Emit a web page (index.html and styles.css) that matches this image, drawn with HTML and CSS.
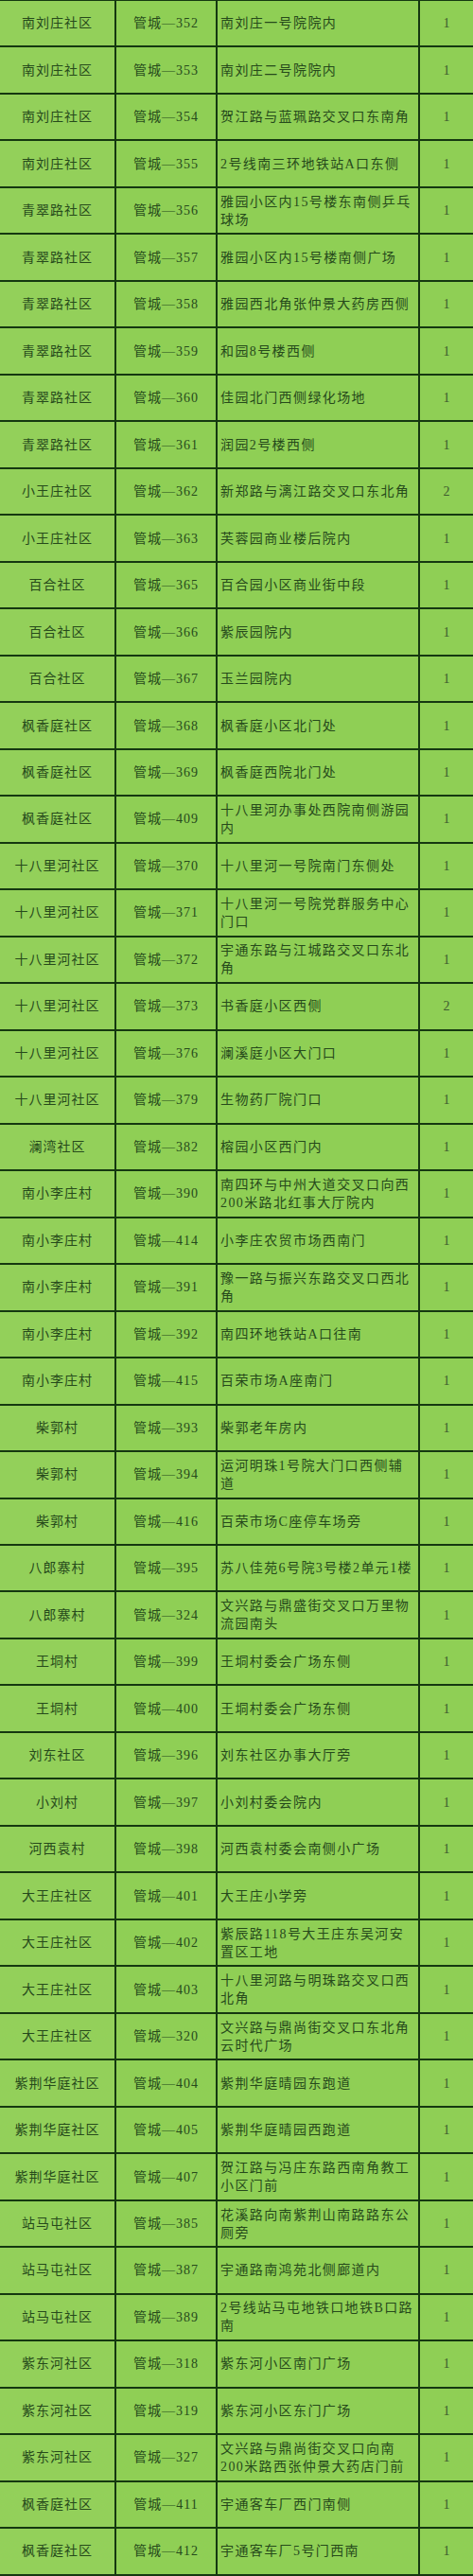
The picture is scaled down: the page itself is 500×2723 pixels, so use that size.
FILE: index.html
```html
<!DOCTYPE html>
<html lang="zh-CN">
<head>
<meta charset="utf-8">
<title>管城点位表</title>
<link rel="stylesheet" href="styles.css">
</head>
<body>
<div class="sheet">
<div class="c name">南刘庄社区</div><div class="c code">管城—352</div><div class="c loc">南刘庄一号院院内</div><div class="c num">1</div>
<div class="c name">南刘庄社区</div><div class="c code">管城—353</div><div class="c loc">南刘庄二号院院内</div><div class="c num">1</div>
<div class="c name">南刘庄社区</div><div class="c code">管城—354</div><div class="c loc">贺江路与蓝珮路交叉口东南角</div><div class="c num">1</div>
<div class="c name">南刘庄社区</div><div class="c code">管城—355</div><div class="c loc">2号线南三环地铁站A口东侧</div><div class="c num">1</div>
<div class="c name">青翠路社区</div><div class="c code">管城—356</div><div class="c loc">雅园小区内15号楼东南侧乒乓<br>球场</div><div class="c num">1</div>
<div class="c name">青翠路社区</div><div class="c code">管城—357</div><div class="c loc">雅园小区内15号楼南侧广场</div><div class="c num">1</div>
<div class="c name">青翠路社区</div><div class="c code">管城—358</div><div class="c loc">雅园西北角张仲景大药房西侧</div><div class="c num">1</div>
<div class="c name">青翠路社区</div><div class="c code">管城—359</div><div class="c loc">和园8号楼西侧</div><div class="c num">1</div>
<div class="c name">青翠路社区</div><div class="c code">管城—360</div><div class="c loc">佳园北门西侧绿化场地</div><div class="c num">1</div>
<div class="c name">青翠路社区</div><div class="c code">管城—361</div><div class="c loc">润园2号楼西侧</div><div class="c num">1</div>
<div class="c name">小王庄社区</div><div class="c code">管城—362</div><div class="c loc">新郑路与漓江路交叉口东北角</div><div class="c num">2</div>
<div class="c name">小王庄社区</div><div class="c code">管城—363</div><div class="c loc">芙蓉园商业楼后院内</div><div class="c num">1</div>
<div class="c name">百合社区</div><div class="c code">管城—365</div><div class="c loc">百合园小区商业街中段</div><div class="c num">1</div>
<div class="c name">百合社区</div><div class="c code">管城—366</div><div class="c loc">紫辰园院内</div><div class="c num">1</div>
<div class="c name">百合社区</div><div class="c code">管城—367</div><div class="c loc">玉兰园院内</div><div class="c num">1</div>
<div class="c name">枫香庭社区</div><div class="c code">管城—368</div><div class="c loc">枫香庭小区北门处</div><div class="c num">1</div>
<div class="c name">枫香庭社区</div><div class="c code">管城—369</div><div class="c loc">枫香庭西院北门处</div><div class="c num">1</div>
<div class="c name">枫香庭社区</div><div class="c code">管城—409</div><div class="c loc">十八里河办事处西院南侧游园<br>内</div><div class="c num">1</div>
<div class="c name">十八里河社区</div><div class="c code">管城—370</div><div class="c loc">十八里河一号院南门东侧处</div><div class="c num">1</div>
<div class="c name">十八里河社区</div><div class="c code">管城—371</div><div class="c loc">十八里河一号院党群服务中心<br>门口</div><div class="c num">1</div>
<div class="c name">十八里河社区</div><div class="c code">管城—372</div><div class="c loc">宇通东路与江城路交叉口东北<br>角</div><div class="c num">1</div>
<div class="c name">十八里河社区</div><div class="c code">管城—373</div><div class="c loc">书香庭小区西侧</div><div class="c num">2</div>
<div class="c name">十八里河社区</div><div class="c code">管城—376</div><div class="c loc">澜溪庭小区大门口</div><div class="c num">1</div>
<div class="c name">十八里河社区</div><div class="c code">管城—379</div><div class="c loc">生物药厂院门口</div><div class="c num">1</div>
<div class="c name">澜湾社区</div><div class="c code">管城—382</div><div class="c loc">榕园小区西门内</div><div class="c num">1</div>
<div class="c name">南小李庄村</div><div class="c code">管城—390</div><div class="c loc">南四环与中州大道交叉口向西<br>200米路北红事大厅院内</div><div class="c num">1</div>
<div class="c name">南小李庄村</div><div class="c code">管城—414</div><div class="c loc">小李庄农贸市场西南门</div><div class="c num">1</div>
<div class="c name">南小李庄村</div><div class="c code">管城—391</div><div class="c loc">豫一路与振兴东路交叉口西北<br>角</div><div class="c num">1</div>
<div class="c name">南小李庄村</div><div class="c code">管城—392</div><div class="c loc">南四环地铁站A口往南</div><div class="c num">1</div>
<div class="c name">南小李庄村</div><div class="c code">管城—415</div><div class="c loc">百荣市场A座南门</div><div class="c num">1</div>
<div class="c name">柴郭村</div><div class="c code">管城—393</div><div class="c loc">柴郭老年房内</div><div class="c num">1</div>
<div class="c name">柴郭村</div><div class="c code">管城—394</div><div class="c loc">运河明珠1号院大门口西侧辅<br>道</div><div class="c num">1</div>
<div class="c name">柴郭村</div><div class="c code">管城—416</div><div class="c loc">百荣市场C座停车场旁</div><div class="c num">1</div>
<div class="c name">八郎寨村</div><div class="c code">管城—395</div><div class="c loc">苏八佳苑6号院3号楼2单元1楼</div><div class="c num">1</div>
<div class="c name">八郎寨村</div><div class="c code">管城—324</div><div class="c loc">文兴路与鼎盛街交叉口万里物<br>流园南头</div><div class="c num">1</div>
<div class="c name">王垌村</div><div class="c code">管城—399</div><div class="c loc">王垌村委会广场东侧</div><div class="c num">1</div>
<div class="c name">王垌村</div><div class="c code">管城—400</div><div class="c loc">王垌村委会广场东侧</div><div class="c num">1</div>
<div class="c name">刘东社区</div><div class="c code">管城—396</div><div class="c loc">刘东社区办事大厅旁</div><div class="c num">1</div>
<div class="c name">小刘村</div><div class="c code">管城—397</div><div class="c loc">小刘村委会院内</div><div class="c num">1</div>
<div class="c name">河西袁村</div><div class="c code">管城—398</div><div class="c loc">河西袁村委会南侧小广场</div><div class="c num">1</div>
<div class="c name">大王庄社区</div><div class="c code">管城—401</div><div class="c loc">大王庄小学旁</div><div class="c num">1</div>
<div class="c name">大王庄社区</div><div class="c code">管城—402</div><div class="c loc">紫辰路118号大王庄东吴河安<br>置区工地</div><div class="c num">1</div>
<div class="c name">大王庄社区</div><div class="c code">管城—403</div><div class="c loc">十八里河路与明珠路交叉口西<br>北角</div><div class="c num">1</div>
<div class="c name">大王庄社区</div><div class="c code">管城—320</div><div class="c loc">文兴路与鼎尚街交叉口东北角<br>云时代广场</div><div class="c num">1</div>
<div class="c name">紫荆华庭社区</div><div class="c code">管城—404</div><div class="c loc">紫荆华庭晴园东跑道</div><div class="c num">1</div>
<div class="c name">紫荆华庭社区</div><div class="c code">管城—405</div><div class="c loc">紫荆华庭晴园西跑道</div><div class="c num">1</div>
<div class="c name">紫荆华庭社区</div><div class="c code">管城—407</div><div class="c loc">贺江路与冯庄东路西南角教工<br>小区门前</div><div class="c num">1</div>
<div class="c name">站马屯社区</div><div class="c code">管城—385</div><div class="c loc">花溪路向南紫荆山南路路东公<br>厕旁</div><div class="c num">1</div>
<div class="c name">站马屯社区</div><div class="c code">管城—387</div><div class="c loc">宇通路南鸿苑北侧廊道内</div><div class="c num">1</div>
<div class="c name">站马屯社区</div><div class="c code">管城—389</div><div class="c loc">2号线站马屯地铁口地铁B口路<br>南</div><div class="c num">1</div>
<div class="c name">紫东河社区</div><div class="c code">管城—318</div><div class="c loc">紫东河小区南门广场</div><div class="c num">1</div>
<div class="c name">紫东河社区</div><div class="c code">管城—319</div><div class="c loc">紫东河小区东门广场</div><div class="c num">1</div>
<div class="c name">紫东河社区</div><div class="c code">管城—327</div><div class="c loc">文兴路与鼎尚街交叉口向南<br>200米路西张仲景大药店门前</div><div class="c num">1</div>
<div class="c name">枫香庭社区</div><div class="c code">管城—411</div><div class="c loc">宇通客车厂西门南侧</div><div class="c num">1</div>
<div class="c name">枫香庭社区</div><div class="c code">管城—412</div><div class="c loc">宇通客车厂5号门西南</div><div class="c num">1</div>
</div>
</body>
</html>
```

FILE: styles.css
```css
html, body {
  margin: 0;
  padding: 0;
  background: #8fcf55;
}

.sheet {
  width: 500px;
  display: grid;
  grid-template-columns: 121px 105px 212px 56px;
  grid-auto-rows: 47.49px;
  column-gap: 2px;
  row-gap: 2px;
  padding: 1px 0 2px;
  background: #153810;
  font-family: "Liberation Serif", "Noto Sans CJK SC", serif;
  font-size: 14px;
  color: #264a1b;
}

.c {
  background: #8fcf55;
  display: flex;
  align-items: center;
  justify-content: center;
  white-space: nowrap;
  line-height: 19px;
}

.name {
  letter-spacing: 1px;
  background: #93d05a;
}

.code {
  letter-spacing: 1px;
}

.loc {
  justify-content: flex-start;
  padding-left: 3px;
  letter-spacing: 1.4px;
}

.num {
  color: #3d5a2e;
}
```
